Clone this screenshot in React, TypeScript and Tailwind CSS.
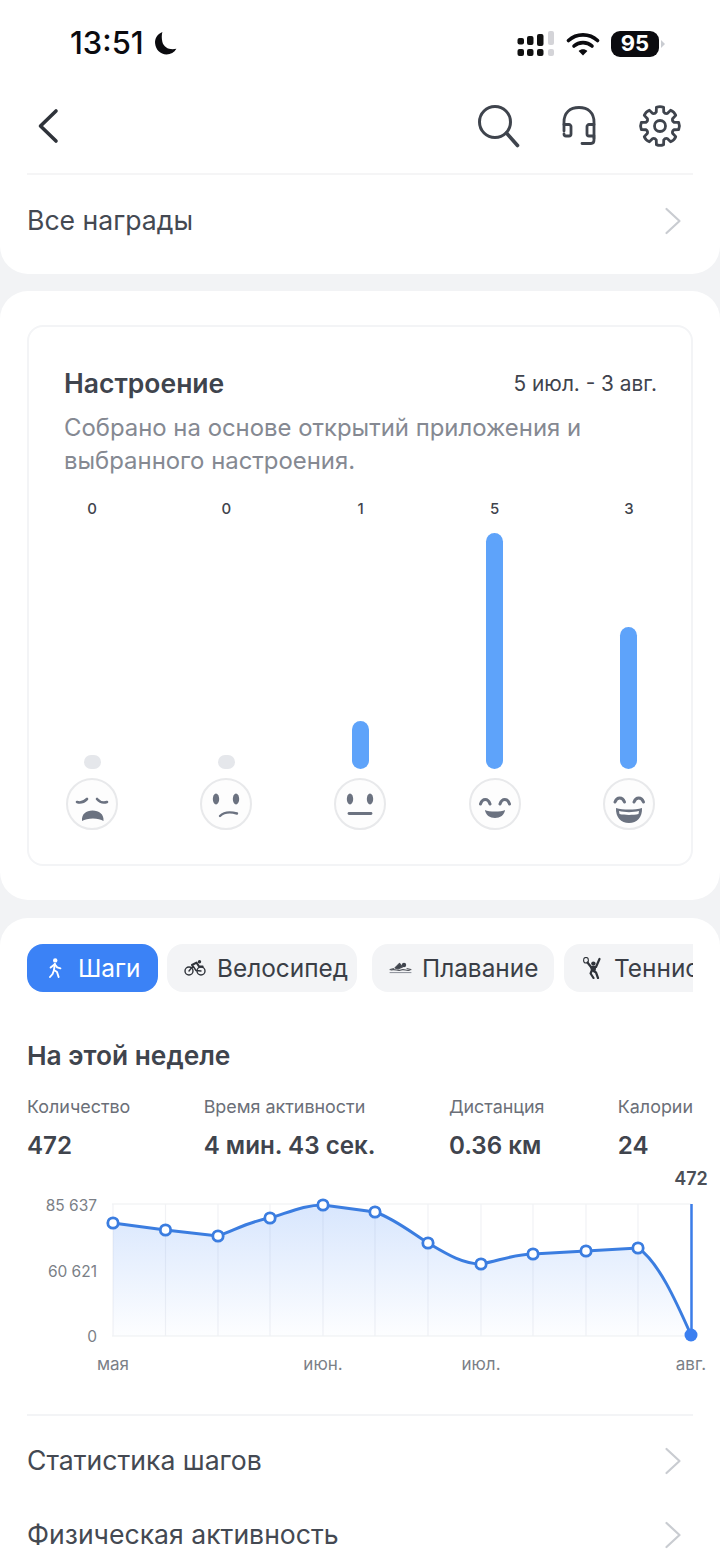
import React from "react";

const Moon = () => (
  <svg width="25" height="27" viewBox="0 0 24 26" className="ml-[9px]">
    <path d="M9 2 C4 4 1.5 8.5 2 13 C2.6 19 7 23.5 13 23.5 C17 23.5 20.5 21.5 22.5 18 C16 19.5 10.5 17 9 11.5 C8.2 8 8.2 5 9 2 Z" fill="#0b0b0f" />
  </svg>
);

const Cellular = () => (
  <svg width="38" height="28" viewBox="0 0 38 28">
    <rect x="0.5" y="8" width="6.5" height="6.5" rx="2" fill="#111" />
    <rect x="0.5" y="19" width="6.5" height="7" rx="2" fill="#111" />
    <rect x="10" y="6" width="6.5" height="9" rx="2" fill="#111" />
    <rect x="10" y="19" width="6.5" height="7" rx="2" fill="#111" />
    <rect x="20" y="4" width="6.5" height="12" rx="2" fill="#111" />
    <rect x="20" y="19" width="6.5" height="7" rx="2" fill="#111" />
    <rect x="31" y="1" width="6" height="14" rx="2" fill="#d4d4d8" />
    <rect x="31" y="19" width="6" height="7" rx="2" fill="#d4d4d8" />
  </svg>
);

const Wifi = () => (
  <svg width="34" height="26" viewBox="0 0 34 26" fill="none" stroke="#0b0b0f" strokeWidth="3.6" strokeLinecap="round">
    <path d="M2.5 9.5 C10.5 2 23.5 2 31.5 9.5" />
    <path d="M8 15 C13 10.5 21 10.5 26 15" />
    <path d="M17 24.5 L12.6 20 C15 17.8 19 17.8 21.4 20 Z" fill="#0b0b0f" stroke="none" />
  </svg>
);

const Back = () => (
  <svg width="22" height="36" viewBox="0 0 22 36" fill="none" stroke="#2f333a" strokeWidth="3.6" strokeLinecap="round" strokeLinejoin="round">
    <path d="M19 3 L3.5 18 L19 33" />
  </svg>
);

const SearchIcon = () => (
  <svg width="42" height="46" viewBox="0 0 42 46" fill="none" stroke="#3f444d" strokeWidth="3" strokeLinecap="round">
    <circle cx="17" cy="19" r="15.5" />
    <path d="M28.5 30 L39.5 42.5" strokeWidth="3.6" />
  </svg>
);

const Headset = () => (
  <svg width="36" height="42" viewBox="0 0 36 42" fill="none" stroke="#3f444d" strokeWidth="2.8" strokeLinecap="round" strokeLinejoin="round">
    <path d="M3 26 V17 C3 7.5 9 2.5 18 2.5 C27 2.5 33 7.5 33 17 V33" />
    <path d="M3 19.5 H8 C9 19.5 10 20.5 10 21.5 V29 C10 30.5 9 31 8 31 H5 C3.8 31 3 30 3 29" />
    <path d="M33 19.5 H28 C27 19.5 26 20.5 26 21.5 V29 C26 30.5 27 31 28 31 H33" />
    <path d="M33 33 V35 C33 37.2 32 38.5 30 38.5 H21" />
  </svg>
);

function gearPath() {
  const cx = 22, cy = 22, teeth = 8;
  const R = 19, r = 14.5;
  let d = "";
  for (let i = 0; i < teeth; i++) {
    const a = (i * 2 * Math.PI) / teeth - Math.PI / 2;
    const w = 0.19, s = 0.26;
    const p = (rad: number, ang: number) => `${(cx + rad * Math.cos(ang)).toFixed(2)} ${(cy + rad * Math.sin(ang)).toFixed(2)}`;
    d += `${i === 0 ? "M" : "L"}${p(r, a - s)} L${p(R, a - w)} Q${p(R + 1.2, a)} ${p(R, a + w)} L${p(r, a + s)} `;
    const mid = a + Math.PI / teeth;
    d += `Q${p(r - 1.5, mid)} ${p(r, a + (2 * Math.PI) / teeth - s)} `;
  }
  return d + "Z";
}

const Gear = () => (
  <svg width="44" height="44" viewBox="0 0 44 44" fill="none" stroke="#3f444d" strokeWidth="2.8" strokeLinejoin="round">
    <path d={gearPath()} />
    <circle cx="22" cy="22" r="5.5" />
  </svg>
);

const ChevronR = () => (
  <svg width="18" height="28" viewBox="0 0 18 28" fill="none" stroke="#c9ccd1" strokeWidth="2.2" strokeLinecap="round" strokeLinejoin="round" className="mr-[11px]">
    <path d="M2.5 2 L15.5 14 L2.5 26" />
  </svg>
);

const Walker = () => (
  <svg width="14" height="20" viewBox="0 0 14 20" fill="none" stroke="#fff" strokeWidth="1.9" strokeLinecap="round" strokeLinejoin="round" className="shrink-0">
    <circle cx="7.2" cy="2.4" r="2.2" fill="#fff" stroke="none" />
    <path d="M6.8 6 L6 12 L9 14 L10.6 19" />
    <path d="M6 12 L4.6 16 L2 19" />
    <path d="M6.8 6.2 L2.6 9.6" />
    <path d="M6.8 6.2 L9.2 9.4 L12.4 10.4" />
  </svg>
);

const Bike = () => (
  <svg width="22" height="16" viewBox="0 0 22 16" fill="none" stroke="#2f333a" strokeWidth="1.4" strokeLinecap="round" strokeLinejoin="round" className="shrink-0">
    <circle cx="5" cy="11" r="4" />
    <circle cx="17" cy="11" r="4" />
    <path d="M5 11 L9 6 L12 10.5 L17 11" />
    <circle cx="15.5" cy="1.8" r="1.7" fill="#2f333a" stroke="none" />
    <path d="M8 5 L12.5 2.6 L15 6.4 L18.6 6.6" strokeWidth="2" />
  </svg>
);

const Swim = () => (
  <svg width="23" height="12" viewBox="0 0 23 12" fill="none" stroke="#4b4f57" strokeLinecap="round" strokeLinejoin="round" className="shrink-0">
    <circle cx="15" cy="3" r="2.2" fill="#3f444d" stroke="none" />
    <path d="M6 6 L10.5 1.5 L13.5 5 L9 7 Z" fill="#3f444d" strokeWidth="1.2" />
    <path d="M1 7.5 L4.5 6.6" strokeWidth="1" />
    <path d="M18 6.6 L22 7.5" strokeWidth="1" />
    <path d="M2 8 C6 6.5 9 9.5 12 8 C15 6.5 18 9.5 21 8" strokeWidth="1.1" />
    <path d="M1 10.6 H22" strokeWidth="1" stroke="#8b8f98" />
  </svg>
);

const Tennis = () => (
  <svg width="19" height="22" viewBox="0 0 19 22" fill="none" stroke="#2f333a" strokeLinecap="round" strokeLinejoin="round" className="shrink-0">
    <ellipse cx="3" cy="3.2" rx="2.4" ry="2.8" strokeWidth="1.1" />
    <path d="M4.5 5.5 L8 10 L9 13 L7.6 16.5 L10.5 21" strokeWidth="2.2" />
    <path d="M9 13 L13 15.5 L15 21" strokeWidth="2.2" />
    <path d="M8 10 L13 10 L16.5 2" strokeWidth="2.2" />
    <path d="M9.2 10.2 L9.8 14 L12.2 13.6 L12.6 10 Z" fill="#2f333a" strokeWidth="1" />
    <circle cx="10.4" cy="6.6" r="2.2" fill="#2f333a" stroke="none" />
  </svg>
);

const Face = ({ kind }: { kind: number }) => {
  const c = "#6b7280";
  return (
    <svg width="54" height="54" viewBox="0 0 54 54" fill="none" strokeLinecap="round">
      <circle cx="27" cy="27" r="25" fill="#fdfdfd" stroke="#e8e9eb" strokeWidth="2" />
      {kind === 0 && (
        <g>
          <path d="M12 25 C15 26 19 25 22 22 M32 22 C35 25.5 39 26 42 25" stroke={c} strokeWidth="2.6" />
          <path d="M17 44 C16.5 37 21 33.5 27.5 33.5 C34 33.5 39 37 38.5 44 C34 40.5 22 40.5 17 44 Z" fill={c} />
        </g>
      )}
      {kind === 1 && (
        <g>
          <ellipse cx="17" cy="22" rx="3.2" ry="5.4" fill={c} />
          <ellipse cx="37" cy="22" rx="3.2" ry="5.4" fill={c} />
          <path d="M21 39 C25 35 31 34.5 38 36.5" stroke={c} strokeWidth="2.4" />
        </g>
      )}
      {kind === 2 && (
        <g>
          <ellipse cx="17" cy="22" rx="3.2" ry="5.4" fill={c} />
          <ellipse cx="37" cy="22" rx="3.2" ry="5.4" fill={c} />
          <path d="M16 36.5 H38" stroke={c} strokeWidth="2.8" />
        </g>
      )}
      {kind === 3 && (
        <g>
          <path d="M12.5 27 C14.5 21 20 21 22 27 M32 27 C34 21 39.5 21 41.5 27" stroke={c} strokeWidth="3" />
          <path d="M17 33 C21 35 33 35 37 33 C36.5 38 32 41 27 41 C22 41 17.5 38 17 33 Z" fill={c} />
        </g>
      )}
      {kind === 4 && (
        <g>
          <path d="M13 25 C15 19.5 20.5 19.5 22.5 25 M32 25 C34 19.5 39.5 19.5 41.5 25" stroke={c} strokeWidth="3" />
          <path d="M14 31 C21 33 33 33 40 31 C40.5 40 35 46 27 46 C19 46 13.5 40 14 31 Z" fill={c} />
          <path d="M17 34 C23 35.5 31 35.5 37 34 L36.5 37 C31 38.2 23 38.2 17.5 37 Z" fill="#fff" />
        </g>
      )}
    </svg>
  );
};

const moods = [
  { n: 0, h: 14 },
  { n: 0, h: 14 },
  { n: 1, h: 48 },
  { n: 5, h: 236 },
  { n: 3, h: 142 },
];

const pts: [number, number][] = [
  [113, 62], [165.5, 69], [218, 75], [270, 57], [323, 44], [375, 51],
  [428, 82], [481, 103], [533, 93], [586, 90], [638, 87], [691, 174],
];

const line =
  "M113 62 L165.5 69 L218 75 C235 69 250 60 270 57 C290 51 305 44 323 44 L375 51 C395 58 412 72 428 82 C445 92 462 103 481 103 C498 100 515 93 533 93 L586 90 L638 87 C658 100 676 140 691 174";

const Chart = () => {
  const labelFill = "#7b7f87";
  return (
    <svg width="720" height="220" viewBox="0 0 720 220" className="block" fontFamily="Inter, sans-serif">
      <defs>
        <linearGradient id="area" x1="0" y1="0" x2="0" y2="1">
          <stop offset="0" stopColor="#3b82f6" stopOpacity="0.2" />
          <stop offset="1" stopColor="#3b82f6" stopOpacity="0.01" />
        </linearGradient>
      </defs>
      <path d="M112 43 H691 M112 175 H691" stroke="#f4f5f6" strokeWidth="1.5" />
      {pts.map(([x]) => (
        <path key={x} d={`M${x} 43 V175`} stroke="#f1f2f5" strokeWidth="1.2" />
      ))}
      <path d={`${line} L691 175 L113 175 Z`} fill="url(#area)" />
      <path d="M691.5 43 V174" stroke="#3b7de8" strokeWidth="2.5" />
      <path d={line} fill="none" stroke="#3b7de0" strokeWidth="3" />
      {pts.slice(0, -1).map(([x, y]) => (
        <circle key={x} cx={x} cy={y} r="5.2" fill="#fff" stroke="#3b7de0" strokeWidth="2.8" />
      ))}
      <circle cx="691" cy="174" r="6.5" fill="#3b7ff0" />
      <g fill={labelFill} fontSize="15.5" textAnchor="end">
        <text x="97" y="50">85 637</text>
        <text x="97" y="116">60 621</text>
        <text x="97" y="181">0</text>
      </g>
      <g fill={labelFill} fontSize="17" textAnchor="middle">
        <text x="113" y="209">мая</text>
        <text x="323" y="209">июн.</text>
        <text x="481" y="209">июл.</text>
        <text x="691" y="209">авг.</text>
      </g>
      <text x="691" y="24" fill="#4b4f57" fontSize="18" fontWeight="600" textAnchor="middle">472</text>
    </svg>
  );
};

const Row = ({ label, h }: { label: string; h: string }) => (
  <div className={`flex items-center justify-between ${h}`}>
    <span className="text-[26.6px] text-[#444952]">{label}</span>
    <ChevronR />
  </div>
);

export default function App() {
  return (
    <div className="w-[720px] h-[1558px] overflow-hidden bg-[#f2f3f5] font-['Inter',sans-serif]">
      <div className="bg-white rounded-b-[28px] h-[274px]">
        <div className="h-[87px] flex items-center justify-between pl-[70px] pr-[54px]">
          <div className="flex items-center">
            <span className="text-[31px] font-medium text-[#0b0b0f]">13:51</span>
            <Moon />
          </div>
          <div className="flex items-center gap-[11px]">
            <Cellular />
            <Wifi />
            <div className="flex items-center">
              <div className="w-[48px] h-[26px] bg-[#0b0b0f] rounded-[9px] flex items-center justify-center text-white text-[22px] font-bold">95</div>
              <svg width="5" height="10" viewBox="0 0 5 10" className="ml-[2px]">
                <path d="M0 1 L4 5 L0 9 Z" fill="#c9ccd1" />
              </svg>
            </div>
          </div>
        </div>
        <div className="mx-[27px] h-[88px] border-b-2 border-[#f5f5f6] flex items-center justify-between pb-[8px]">
          <div className="ml-[10px]">
            <Back />
          </div>
          <div className="flex items-center gap-[41px] mr-[11px]">
            <SearchIcon />
            <Headset />
            <Gear />
          </div>
        </div>
        <div className="mx-[27px]">
          <Row label="Все награды" h="h-[92px]" />
        </div>
      </div>

      <div className="mt-[17px] bg-white rounded-[28px] h-[609px] px-[27px] pt-[34px]">
        <div className="h-[541px] rounded-[16px] border-2 border-[#f3f4f6] pt-[40px]">
          <div className="flex items-center justify-between pl-[35px] pr-[34px] h-[34px]">
            <span className="text-[26.5px] font-semibold text-[#3f444d]">Настроение</span>
            <span className="text-[20.8px] text-[#3f444d]">5 июл. - 3 авг.</span>
          </div>
          <p className="pl-[35px] pr-[36px] mt-[10px] text-[23.9px] leading-[33px] text-[#858992]">
            Собрано на основе открытий приложения и выбранного настроения.
          </p>
          <div className="grid grid-cols-5 -ml-[4px] -mr-[5px] mt-[22px]">
            {moods.map((m, i) => (
              <div key={i} className="flex flex-col items-center">
                <span className="text-[15px] font-medium text-[#3f444d] h-[20px] leading-[20px]">{m.n}</span>
                <div className="h-[250px] flex items-end">
                  <div
                    className={`w-[17px] rounded-full ${m.n === 0 ? "bg-[#e5e7eb]" : "bg-[#5ea3fa]"}`}
                    style={{ height: m.h }}
                  />
                </div>
                <div className="mt-[8px]">
                  <Face kind={i} />
                </div>
              </div>
            ))}
          </div>
        </div>
      </div>

      <div className="mt-[18px] bg-white rounded-t-[28px] h-[640px] pt-[26px]">
        <div className="mx-[27px] flex overflow-hidden">
          <div className="h-[48px] w-[131px] shrink-0 rounded-[16px] bg-[#3b82f6] text-white flex items-center pl-[21px] gap-[16px] text-[24.4px] whitespace-nowrap">
            <Walker />
            <span>Шаги</span>
          </div>
          <div className="h-[48px] w-[190px] shrink-0 ml-[9px] rounded-[16px] bg-[#f3f4f6] text-[#3a3e46] flex items-center pl-[17px] gap-[11px] text-[24.4px] whitespace-nowrap">
            <Bike />
            <span>Велосипед</span>
          </div>
          <div className="h-[48px] w-[182px] shrink-0 ml-[15px] rounded-[16px] bg-[#f3f4f6] text-[#3a3e46] flex items-center pl-[17px] gap-[10px] text-[24.4px] whitespace-nowrap">
            <Swim />
            <span>Плавание</span>
          </div>
          <div className="h-[48px] w-[150px] shrink-0 ml-[10px] rounded-[16px] bg-[#f3f4f6] text-[#3a3e46] flex items-center pl-[19px] gap-[12px] text-[24.4px] whitespace-nowrap">
            <Tennis />
            <span>Теннис</span>
          </div>
        </div>

        <div className="mx-[27px] mt-[47px] text-[26.3px] font-semibold leading-[34px] text-[#3f444d]">На этой неделе</div>

        <div className="mx-[27px] mt-[22px] flex justify-between">
          {[
            ["Количество", "472"],
            ["Время активности", "4 мин. 43 сек."],
            ["Дистанция", "0.36 км"],
            ["Калории", "24"],
          ].map(([a, b]) => (
            <div key={a} className="flex flex-col">
              <span className="text-[17.9px] leading-[24px] text-[#6b6f78] whitespace-nowrap">{a}</span>
              <span className="mt-[12px] text-[24.2px] leading-[30px] font-semibold text-[#3f444d] whitespace-nowrap">{b}</span>
            </div>
          ))}
        </div>

        <Chart />

        <div className="mx-[27px] border-t-2 border-[#f3f4f6] mt-[33px]">
          <Row label="Статистика шагов" h="h-[89px]" />
          <Row label="Физическая активность" h="h-[59px]" />
        </div>
      </div>
    </div>
  );
}
